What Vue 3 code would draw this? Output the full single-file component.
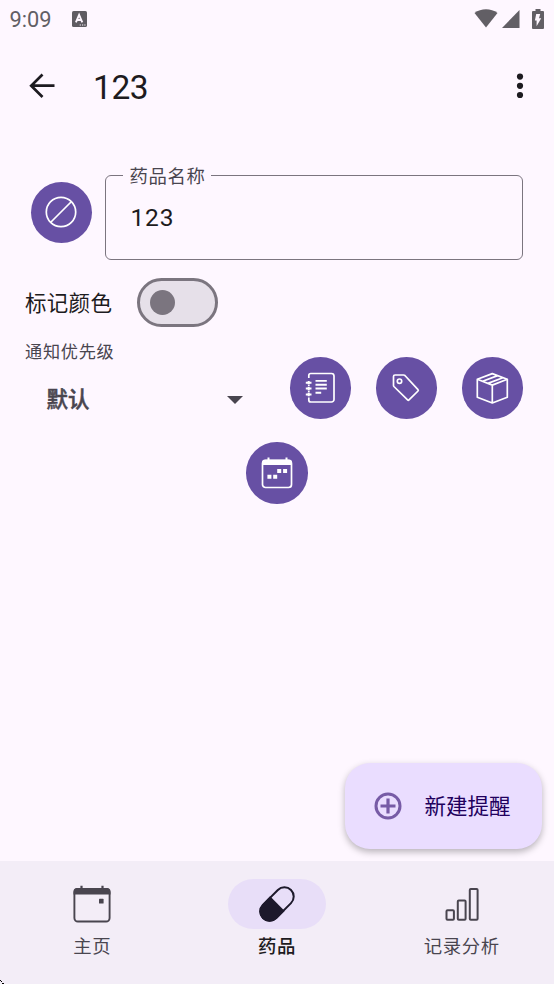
<script setup>
const tabs = [
  { id: 'home', label: '主页', active: false },
  { id: 'medicine', label: '药品', active: true },
  { id: 'analysis', label: '记录分析', active: false },
]
</script>

<template>
  <div class="screen">
    <header class="status">
      <span class="time">9:09</span>
      <svg class="ime" width="15" height="16" viewBox="0 0 15 16">
        <rect width="15" height="16" rx="1.6" fill="#5f5c62" />
        <path d="M3.900 11.300 7.100 3.800 10.300 11.300M5.100 9h4" fill="none" stroke="#fef7ff" stroke-width="1.900" />
        <path d="M7.700 14h1.200M10 14h1.200M12.300 14h1.200" stroke="#fef7ff" stroke-width="1.100" />
      </svg>
      <svg class="wifi" width="24" height="19" viewBox="0 0 24 19">
        <path d="M.5 4C7-1 17-1 23.500 4L12 18.500Z" fill="#625f65" />
      </svg>
      <svg class="signal" width="18" height="18" viewBox="0 0 18 18">
        <path d="M17.500 0V18H0Z" fill="#625f65" />
      </svg>
      <svg class="battery" width="12" height="20" viewBox="0 0 12 20">
        <path d="M3.500 0h5v2H11a1 1 0 0 1 1 1v16a1 1 0 0 1-1 1H1a1 1 0 0 1-1-1V3a1 1 0 0 1 1-1h2.500Z" fill="#625f65" />
        <path d="M4.200 5h4L7 9.200h2.200L4.600 17.300V11.500H2.900Z" fill="#fef7ff" />
      </svg>
    </header>

    <div class="appbar">
      <svg class="back" width="26" height="26" viewBox="0 0 26 26" fill="none" stroke="#1d1b20" stroke-width="2.700">
        <path d="M13.500 1.500 2.200 12.700 13.500 24M2.500 12.700H25.500" />
      </svg>
      <h1>123</h1>
      <svg class="more" width="8" height="26" viewBox="0 0 8 26" fill="#1d1b20">
        <circle cx="4" cy="3.600" r="3.100" /><circle cx="4" cy="12.800" r="3.100" /><circle cx="4" cy="22" r="3.100" />
      </svg>
    </div>

    <main>
      <section class="name-row">
        <button class="round">
          <svg width="34" height="34" viewBox="0 0 34 34" fill="none" stroke="#fff" stroke-width="1.700">
            <circle cx="17" cy="17" r="14.700" /><path d="M7 27 27 7" />
          </svg>
        </button>
        <div class="field">
          <label>药品名称</label>
          <span>123</span>
        </div>
      </section>

      <section class="color-row">
        <span>标记颜色</span>
        <div class="switch"><i></i></div>
      </section>

      <section class="priority-row">
        <div class="priority">
          <span class="caption">通知优先级</span>
          <div class="select">
            <b>默认</b>
            <svg width="16" height="8" viewBox="0 0 16 8"><path d="M0 0H16L8 8Z" fill="#49454f" /></svg>
          </div>
        </div>
        <button class="round">
          <svg width="34" height="34" viewBox="0 0 34 34" fill="none" stroke="#fff" stroke-width="1.700">
            <path d="M4.800 7V4.500a2 2 0 0 1 2-2H27.500a2.500 2.500 0 0 1 2.500 2.500V28.500a2.500 2.500 0 0 1-2.500 2.500H6.800a2 2 0 0 1-2-2V26.500M4.800 14v1M4.800 20v1" />
            <path d="M1.800 11.800H7.500M1.800 17.600H7.500M1.800 23.400H7.500M4.700 10v3.600M4.700 15.800v3.600M4.700 21.600v3.600" stroke-width="2" />
            <path d="M11.500 9.900H22.800M11.500 13.700H22.800M11.500 17.500H22.800M11.500 21.800H17.200" stroke-width="1.900" />
          </svg>
        </button>
        <button class="round">
          <svg width="34" height="34" viewBox="0 0 34 34" fill="none" stroke="#fff" stroke-width="1.700" stroke-linejoin="round">
            <path d="M4.500 5.500a1.500 1.500 0 0 1 1.500-1.500H14.600a2 2 0 0 1 1.300.5L29 18.600a1 1 0 0 1 0 1.400L20 28.900a1 1 0 0 1-1.400 0L4.900 15.500a1.500 1.500 0 0 1-.4-1Z" />
            <circle cx="10.500" cy="10.200" r="2.200" />
          </svg>
        </button>
        <button class="round">
          <svg width="34" height="34" viewBox="0 0 34 34" fill="none" stroke="#fff" stroke-width="1.700" stroke-linejoin="round">
            <path d="M17.300 2.600 32.300 8.300V26.200L17.300 32 2.300 26.200V8.300ZM2.300 8.300 17.300 14.100 32.300 8.300M17.300 14.100V32M7.600 10.300 22.700 4.600M12.900 12.400 27.900 6.700" />
          </svg>
        </button>
      </section>

      <section class="schedule-row">
        <button class="round">
          <svg width="34" height="34" viewBox="0 0 34 34" fill="none" stroke="#fff" stroke-width="1.700">
            <rect x="2.500" y="4.500" width="29" height="27" rx="3" />
            <path d="M2 9V6.500a3 3 0 0 1 3-3H29a3 3 0 0 1 3 3V9Z" fill="#fff" stroke="none" />
            <path d="M8.500 1.500V5M26.500 1.500V5" stroke-width="2" />
            <path d="M7.400 18.700h4v4h-4ZM13.200 18.700h4v4h-4ZM17.200 13h4v4h-4ZM23.100 13h4v4h-4Z" fill="#fff" stroke="none" />
          </svg>
        </button>
      </section>
    </main>

    <button class="fab">
      <svg width="28" height="28" viewBox="0 0 28 28" fill="none" stroke="#775ba6" stroke-width="3">
        <circle cx="14" cy="14" r="12" /><path d="M14 6.500V21.500M6.500 14H21.500" stroke-width="3.200" />
      </svg>
      <span>新建提醒</span>
    </button>

    <nav>
      <div v-for="tab in tabs" :key="tab.id" class="tab" :class="{ active: tab.active }">
        <div class="pill">
          <svg v-if="tab.id === 'home'" width="38" height="38" viewBox="0 0 38 38" fill="none" stroke="#49454f" stroke-width="1.900">
            <rect x="1.400" y="4" width="35.200" height="32.500" rx="3.500" />
            <path d="M.5 9.500V6.500A3.500 3.500 0 0 1 4 3H34a3.500 3.500 0 0 1 3.500 3.500V9.500Z" fill="#49454f" stroke="none" />
            <path d="M8.500.7V5M29.500.7V5" stroke-width="2.200" />
            <rect x="26" y="13.800" width="4.600" height="4.800" rx=".6" fill="#49454f" stroke="none" />
          </svg>
          <svg v-else-if="tab.id === 'medicine'" width="38" height="38" viewBox="0 0 38 38">
            <g transform="rotate(45 19 19)">
              <rect x="9.700" y="-.8" width="18.600" height="39.600" rx="9.300" fill="none" stroke="#1d192b" stroke-width="2" />
              <path d="M8.700 18.500H29.300V29.500a10.300 10.300 0 0 1-20.600 0Z" fill="#1d192b" />
            </g>
          </svg>
          <svg v-else width="38" height="38" viewBox="0 0 38 38" fill="none" stroke="#49454f" stroke-width="2">
            <rect x="3.500" y="25.200" width="7.400" height="9.600" rx="1" />
            <rect x="14.800" y="15.500" width="7.800" height="19.300" rx="1" />
            <rect x="26.800" y="4" width="7.800" height="30.800" rx="1" />
          </svg>
        </div>
        <span>{{ tab.label }}</span>
      </div>
    </nav>
    <svg class="corner" width="4" height="4" viewBox="0 0 4 4" shape-rendering="crispEdges">
      <path d="M0 0h1v1H0ZM1 1h1v1H1ZM2 3h2v1H2Z" fill="#000" />
    </svg>
  </div>
</template>

<style>
body { margin: 0; background: #fef7ff; }
</style>

<style scoped>
* { box-sizing: border-box; }
.screen {
  position: relative;
  display: flex;
  flex-direction: column;
  width: 554px;
  height: 984px;
  overflow: hidden;
  background: #fef7ff;
  color: #1d1b20;
  font-family: Roboto, "Noto Sans CJK SC", sans-serif;
}
svg { display: block; flex: none; }
button { border: 0; padding: 0; font: inherit; }
.status {
  display: flex;
  align-items: center;
  height: 37px;
  padding: 0 10px 0 9px;
  color: #625f65;
}
.time { width: 63px; padding: 2px 0 0 .5px; font-size: 21.800px; line-height: 24px; }
.wifi { margin-left: auto; }
.signal { margin-left: 4px; }
.battery { margin-left: 12px; }
.appbar {
  display: flex;
  align-items: center;
  height: 98px;
  padding: 0 30px 0 29px;
}
h1 { margin: 3px 0 0 38px; font-size: 33.500px; font-weight: 400; line-height: 40px; letter-spacing: -.4px; }
.more { margin-left: auto; }
main { flex: 1; padding: 40px 31px 0 25px; }
.round {
  display: flex;
  align-items: center;
  justify-content: center;
  flex: none;
  width: 61.500px;
  height: 61.500px;
  border-radius: 50%;
  background: #6750a4;
}
.name-row { display: flex; gap: 12.500px; padding-left: 5.500px; }
.name-row .round { margin-top: 6.500px; }
.field {
  position: relative;
  flex: 1;
  height: 85px;
  padding: 24px 25px;
  border: 1.500px solid #7b757f;
  border-radius: 6px;
  font-size: 24.500px;
  line-height: 36px;
  letter-spacing: .8px;
}
.field label {
  position: absolute;
  left: 17px;
  top: -13px;
  padding: 0 6px 0 7px;
  background: #fef7ff;
  color: #49454f;
  font-size: 18.400px;
  line-height: 28px;
  letter-spacing: .6px;
}
.color-row {
  display: flex;
  align-items: center;
  gap: 25px;
  height: 49px;
  margin-top: 18px;
  font-size: 21.500px;
  letter-spacing: .3px;
}
.color-row span { padding-bottom: 2px; }
.switch {
  width: 81px;
  height: 49px;
  padding: 9px 0 0 9.500px;
  border: 3px solid #7b757f;
  border-radius: 25px;
  background: #e6e0e9;
}
.switch i { display: block; width: 25px; height: 25px; border-radius: 50%; background: #7b757f; }
.priority-row { display: flex; gap: 24.300px; height: 85px; margin-top: 12px; }
.priority-row .round { margin-top: 18px; }
.priority { flex: 1; }
.caption { display: block; color: #49454f; font-size: 17.200px; line-height: 26px; letter-spacing: .7px; }
.select {
  display: flex;
  align-items: center;
  justify-content: space-between;
  height: 32px;
  margin-top: 19px;
  padding: 0 23px 0 21.500px;
  color: #49454f;
  font-size: 21.500px;
  line-height: 32px;
}
.select b { font-weight: 500; -webkit-text-stroke: .5px #49454f; }
.schedule-row { display: flex; justify-content: center; padding: 18px 0 0 6px; }
.fab {
  position: absolute;
  right: 12px;
  bottom: 135px;
  display: flex;
  align-items: center;
  gap: 23px;
  width: 197.500px;
  height: 86px;
  padding-left: 29px;
  border-radius: 25px;
  background: #eaddff;
  color: #21005d;
  font-size: 21.500px;
  box-shadow: 0 3px 7px rgba(0, 0, 0, .28);
}
.fab span { padding-bottom: 3px; }
nav {
  display: flex;
  height: 123px;
  background: #f3edf7;
}
.tab {
  display: flex;
  flex: 1;
  flex-direction: column;
  align-items: center;
  padding-top: 18px;
  color: #49454f;
  font-size: 18.400px;
  line-height: 28px;
  letter-spacing: .6px;
}
.tab span { margin-top: 4px; }
.pill {
  display: flex;
  align-items: center;
  justify-content: center;
  width: 98px;
  height: 50px;
  border-radius: 25px;
}
.active { color: #1d1b20; font-weight: 500; }
.active .pill { background: #e8def8; }
.corner { position: absolute; left: 0; bottom: 0; }
</style>
